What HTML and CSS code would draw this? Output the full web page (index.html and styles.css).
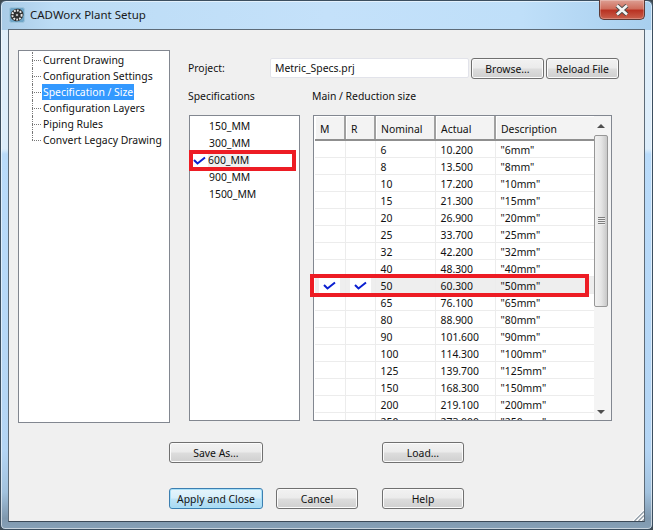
FILE: index.html
```html
<!DOCTYPE html>
<html lang="en">
<head>
    <meta charset="UTF-8">
    <title>CADWorx Plant Setup</title>
    <link rel="stylesheet" href="styles.css">
</head>
<body>
    <div class="window">
        <div class="titlebar">
            <svg class="app-icon" width="16" height="16" viewBox="0 0 16 16">
                <rect x="0.5" y="0.5" width="15" height="15" rx="2" fill="#6fa6c8" stroke="#9cc4dc"/>
                <ellipse cx="8" cy="8" rx="6.6" ry="6" transform="rotate(-35 8 8)" fill="#2b2b2b"/>
                <circle cx="8" cy="8" r="4.6" fill="none" stroke="#e8e8e8" stroke-width="2" stroke-dasharray="1.8 1.2"/>
                <circle cx="8" cy="8" r="2.2" fill="#3a3a3a"/>
                <circle cx="8" cy="8" r="1" fill="#dddddd"/>
            </svg>
            <span class="title-text">CADWorx Plant Setup</span>
            <div class="close-btn">
                <svg width="16" height="12" viewBox="0 0 16 12">
                    <path d="M3 1.5 L13 10.5 M13 1.5 L3 10.5" stroke="#4a4a4a" stroke-width="4.4" fill="none"/>
                    <path d="M3 1.5 L13 10.5 M13 1.5 L3 10.5" stroke="#f4f4f4" stroke-width="2.6" fill="none"/>
                </svg>
            </div>
        </div>

        <div class="client">
            <div class="top">
                <ul class="tree">
                    <li><span>Current Drawing</span></li>
                    <li><span>Configuration Settings</span></li>
                    <li><span class="selected">Specification / Size</span></li>
                    <li><span>Configuration Layers</span></li>
                    <li><span>Piping Rules</span></li>
                    <li><span>Convert Legacy Drawing</span></li>
                </ul>

                <div class="main">
                    <div class="project-row">
                        <label class="project-label">Project:</label>
                        <div class="text-input">Metric_Specs.prj</div>
                        <button class="btn btn-browse">Browse...</button>
                        <button class="btn btn-reload">Reload File</button>
                    </div>

                    <div class="headings">
                        <div class="heading-spec">Specifications</div>
                        <div>Main / Reduction size</div>
                    </div>

                    <div class="panels">
                        <div class="spec-list">
                            <div class="spec">150_MM</div>
                            <div class="spec">300_MM</div>
                            <div class="spec checked">
                                <svg class="check" width="13" height="9" viewBox="0 0 13 9"><path d="M1 4 L4.5 7.5 L12 1.5" stroke="#0a1fd0" stroke-width="2" fill="none"/></svg>
                                <span>600_MM</span>
                            </div>
                            <div class="spec">900_MM</div>
                            <div class="spec">1500_MM</div>
                            <div class="red-box red-spec"></div>
                        </div>

                        <div class="grid-wrap">
                            <div class="grid">
                                <table>
                                    <colgroup>
                                        <col class="col-m"><col class="col-r"><col class="col-nom"><col class="col-act"><col class="col-desc">
                                    </colgroup>
                                    <thead>
                                        <tr><th>M</th><th>R</th><th>Nominal</th><th>Actual</th><th>Description</th></tr>
                                    </thead>
                                    <tbody>
                                        <tr><td></td><td></td><td>6</td><td>10.200</td><td>"6mm"</td></tr>
                                        <tr><td></td><td></td><td>8</td><td>13.500</td><td>"8mm"</td></tr>
                                        <tr><td></td><td></td><td>10</td><td>17.200</td><td>"10mm"</td></tr>
                                        <tr><td></td><td></td><td>15</td><td>21.300</td><td>"15mm"</td></tr>
                                        <tr><td></td><td></td><td>20</td><td>26.900</td><td>"20mm"</td></tr>
                                        <tr><td></td><td></td><td>25</td><td>33.700</td><td>"25mm"</td></tr>
                                        <tr><td></td><td></td><td>32</td><td>42.200</td><td>"32mm"</td></tr>
                                        <tr><td></td><td></td><td>40</td><td>48.300</td><td>"40mm"</td></tr>
                                        <tr class="picked">
                                            <td class="tick"><svg width="13" height="9" viewBox="0 0 13 9"><path d="M1 4 L4.5 7.5 L12 1.5" stroke="#0a1fd0" stroke-width="2" fill="none"/></svg></td>
                                            <td class="tick"><svg width="13" height="9" viewBox="0 0 13 9"><path d="M1 4 L4.5 7.5 L12 1.5" stroke="#0a1fd0" stroke-width="2" fill="none"/></svg></td>
                                            <td>50</td><td>60.300</td><td>"50mm"</td>
                                        </tr>
                                        <tr><td></td><td></td><td>65</td><td>76.100</td><td>"65mm"</td></tr>
                                        <tr><td></td><td></td><td>80</td><td>88.900</td><td>"80mm"</td></tr>
                                        <tr><td></td><td></td><td>90</td><td>101.600</td><td>"90mm"</td></tr>
                                        <tr><td></td><td></td><td>100</td><td>114.300</td><td>"100mm"</td></tr>
                                        <tr><td></td><td></td><td>125</td><td>139.700</td><td>"125mm"</td></tr>
                                        <tr><td></td><td></td><td>150</td><td>168.300</td><td>"150mm"</td></tr>
                                        <tr><td></td><td></td><td>200</td><td>219.100</td><td>"200mm"</td></tr>
                                        <tr><td></td><td></td><td>250</td><td>273.000</td><td>"250mm"</td></tr>
                                    </tbody>
                                </table>
                                <div class="scrollbar">
                                    <div class="arrow arrow-up"></div>
                                    <div class="thumb"><div class="grip"></div></div>
                                    <div class="track"></div>
                                    <div class="arrow arrow-down"></div>
                                </div>
                            </div>
                            <div class="red-box red-row"></div>
                        </div>
                    </div>
                </div>
            </div>

            <div class="actions">
                <button class="btn save-as">Save As...</button>
                <button class="btn load">Load...</button>
                <button class="btn default">Apply and Close</button>
                <button class="btn cancel">Cancel</button>
                <button class="btn help">Help</button>
            </div>

            <svg class="resize-grip" width="12" height="12" viewBox="0 0 12 12">
                <path d="M12 1 L1 12 M12 5 L5 12 M12 9 L9 12" stroke="#ffffff" stroke-width="1.2" fill="none"/>
                <path d="M12 2.5 L2.5 12 M12 6.5 L6.5 12 M12 10.5 L10.5 12" stroke="#8d9aa5" stroke-width="1.2" fill="none"/>
            </svg>
        </div>
    </div>
</body>
</html>
```

FILE: styles.css
```css
html, body {
    margin: 0;
    padding: 0;
    background-color: #3f4a52;
}
body {
    width: 653px;
    height: 530px;
    overflow: hidden;
    font-family: "Noto Sans", Tahoma, sans-serif;
    font-size: 10.4px;
    color: #111111;
}
.window {
    box-sizing: border-box;
    width: 653px;
    height: 530px;
    padding: 0 7px 7px 7px;
    display: flex;
    flex-direction: column;
    border: 1px solid #3c4f60;
    border-radius: 6px 6px 5px 5px;
    box-shadow: inset 0 0 0 1px rgba(255, 255, 255, 0.55);
    background:
        linear-gradient(90deg, #a9cbe6 0, #bcdcf5 8%, #c4e1fa 50%, #bfdff9 80%, #a8cfee 100%) 0 0 / 100% 29px no-repeat,
        linear-gradient(180deg, #e2f0fb 0, #dcedfb 28%, #b9dbfa 29%, #b4d5f4 85%, #a2c2de 93%, #7f98ae 98%, #86a0b6 100%);
}

/* title bar */
.titlebar {
    height: 28px;
    flex: none;
    display: flex;
    align-items: center;
    position: relative;
}
.app-icon {
    margin-left: 1px;
    margin-top: -1px;
}
.title-text {
    margin-left: 5px;
    margin-top: -1px;
    font-size: 11.5px;
    color: #1a1a1a;
}
.close-btn {
    position: absolute;
    top: -1px;
    right: 0;
    width: 46px;
    height: 20px;
    box-sizing: border-box;
    display: flex;
    align-items: center;
    justify-content: center;
    border: 1px solid #5c3a36;
    border-top: none;
    border-radius: 0 0 5px 5px;
    box-shadow: inset 0 0 0 1px rgba(255, 255, 255, 0.25);
    background: linear-gradient(180deg, #dd9f93 0, #cf6f5e 45%, #b93323 55%, #c9604c 100%);
}

/* client area */
.client {
    flex: 1;
    position: relative;
    box-sizing: border-box;
    border: 1px solid #5d6b78;
    border-bottom-color: #3c4a58;
    background-color: #f0f0f0;
    padding: 20px 0 0 9px;
}
.top {
    display: flex;
    align-items: flex-start;
}

/* left tree */
.tree {
    list-style: none;
    box-sizing: border-box;
    width: 152px;
    height: 373px;
    margin: 0;
    padding: 1px 0 0 24px;
    background-color: #ffffff;
    border: 1px solid #828790;
    flex: none;
}
.tree li {
    position: relative;
    height: 16px;
    line-height: 16px;
    white-space: nowrap;
}
.tree li span {
    display: inline-block;
    margin-left: -1px;
    padding: 0 1px;
}
.tree li::before {
    content: "";
    position: absolute;
    left: -11px;
    top: 8px;
    width: 9px;
    border-top: 1px dotted #777777;
}
.tree li::after {
    content: "";
    position: absolute;
    left: -11px;
    top: 0;
    height: 8px;
    border-left: 1px dotted #777777;
}
.tree li:not(:last-child)::after {
    height: 16px;
}
.tree .selected {
    background-color: #3399ff;
    color: #ffffff;
}

/* right side */
.main {
    margin-left: 18px;
    padding-top: 8px;
    flex: 1;
}
.project-row {
    display: flex;
    align-items: flex-start;
    height: 21px;
}
.project-label {
    width: 82px;
    line-height: 19px;
    margin-top: 1px;
}
.text-input {
    box-sizing: border-box;
    width: 199px;
    height: 20px;
    line-height: 19px;
    padding-left: 4px;
    background-color: #ffffff;
    border: 1px solid #e2e3ea;
    border-radius: 2px;
    margin-right: 2px;
}
.btn {
    box-sizing: border-box;
    height: 21px;
    padding: 0;
    font-family: "Noto Sans", Tahoma, sans-serif;
    font-size: 10.4px;
    color: #111111;
    border: 1px solid #707070;
    border-radius: 3px;
    box-shadow: inset 0 0 0 1px #fbfbfb;
    background: linear-gradient(180deg, #f2f2f2 0, #ebebeb 48%, #dddddd 52%, #cfcfcf 100%);
}
.btn-browse {
    width: 73px;
    margin-right: 2px;
}
.btn-reload {
    width: 73px;
}
.headings {
    display: flex;
    height: 15px;
    line-height: 15px;
    margin-top: 10px;
}
.heading-spec {
    width: 124px;
}
.panels {
    display: flex;
    margin-top: 11px;
    margin-left: 1px;
}
.spec-list {
    position: relative;
    box-sizing: border-box;
    width: 111px;
    height: 306px;
    padding-top: 2px;
    background-color: #ffffff;
    border: 1px solid #828790;
    margin-right: 13px;
}
.spec {
    height: 17px;
    line-height: 17px;
    padding-left: 19px;
    display: flex;
    align-items: center;
}
.spec.checked {
    padding-left: 2px;
}
.spec .check {
    margin: 0 2px 0 1px;
    flex: none;
}
.spec.checked span {
    background-color: #f0f0f0;
    width: 42px;
}

/* grid */
.grid-wrap {
    position: relative;
}
.grid {
    box-sizing: border-box;
    width: 299px;
    height: 306px;
    background-color: #ffffff;
    border: 1px solid #828790;
    display: flex;
    overflow: hidden;
}
table {
    border-collapse: collapse;
    table-layout: fixed;
    width: 279px;
    flex: none;
    align-self: flex-start;
    margin-left: 1px;
}
.col-m { width: 30px; }
.col-r { width: 30px; }
.col-nom { width: 60px; }
.col-act { width: 60px; }
.col-desc { width: 99px; }
th {
    box-sizing: border-box;
    height: 24px;
    padding: 2px 0 0 5px;
    font-weight: normal;
    text-align: left;
    background-color: #f3f3f3;
    border-right: 2px solid #a0a0a0;
    border-bottom: 2px solid #8f8f8f;
    box-shadow: inset 1px 1px 0 #ffffff;
}
th:last-child {
    border-right: none;
}
td {
    box-sizing: border-box;
    height: 17px;
    padding: 2px 0 0 5px;
    border-right: 1px solid #ececec;
    border-bottom: 1px solid #ececec;
    line-height: 14px;
    overflow: hidden;
    white-space: nowrap;
}
td:last-child {
    border-right: none;
}
.picked td {
    background-color: #eeeeee;
}
.picked .tick {
    padding: 0;
    text-align: center;
}
.picked .tick svg {
    display: block;
    margin: 0 auto;
    background-color: #ffffff;
    padding: 3px 4px;
}

/* scrollbar */
.scrollbar {
    box-sizing: border-box;
    width: 17px;
    padding-right: 3px;
    display: flex;
    flex-direction: column;
    background-color: #f4f4f4;
    flex: none;
}
.arrow {
    height: 17px;
    flex: none;
    display: flex;
    align-items: center;
    justify-content: center;
}
.arrow-up {
    height: 19px;
}
.arrow::before {
    content: "";
    width: 0;
    height: 0;
    border-left: 4px solid transparent;
    border-right: 4px solid transparent;
}
.arrow-up::before {
    border-bottom: 4px solid #505050;
}
.arrow-down::before {
    border-top: 4px solid #505050;
}
.thumb {
    box-sizing: border-box;
    height: 172px;
    flex: none;
    display: flex;
    align-items: center;
    justify-content: center;
    border: 1px solid #979797;
    border-radius: 2px;
    background: linear-gradient(90deg, #f0f0f0 0, #e6e6e6 50%, #c8c8c8 100%);
}
.grip {
    width: 7px;
    height: 8px;
    background: repeating-linear-gradient(180deg, #7f7f7f 0, #7f7f7f 1px, #eeeeee 1px, #eeeeee 2px);
}
.track {
    flex: 1;
}

/* red markers */
.red-box {
    position: absolute;
    box-sizing: border-box;
    border: 4px solid #ed1c24;
}
.red-spec {
    left: -1px;
    top: 34px;
    width: 107px;
    height: 21px;
}
.red-row {
    left: -3px;
    top: 159px;
    width: 279px;
    height: 23px;
}

/* bottom buttons */
.actions {
    display: grid;
    grid-template-columns: 94px 13px 82px 24px 82px;
    grid-auto-rows: 21px;
    row-gap: 25px;
    margin: 19px 0 0 151px;
}
.actions .save-as {
    grid-column: 1;
}
.actions .load {
    grid-column: 5;
}
.actions .default {
    grid-column: 1;
    border-color: #3c7fb1;
    box-shadow: inset 0 0 0 1px #a8e0f8;
    background: linear-gradient(180deg, #e6f5fc 0, #d6eefa 48%, #bfe4f7 52%, #a9d9f2 100%);
}
.actions .cancel {
    grid-column: 3;
}
.actions .help {
    grid-column: 5;
}
.resize-grip {
    position: absolute;
    right: 0;
    bottom: 0;
}
```
